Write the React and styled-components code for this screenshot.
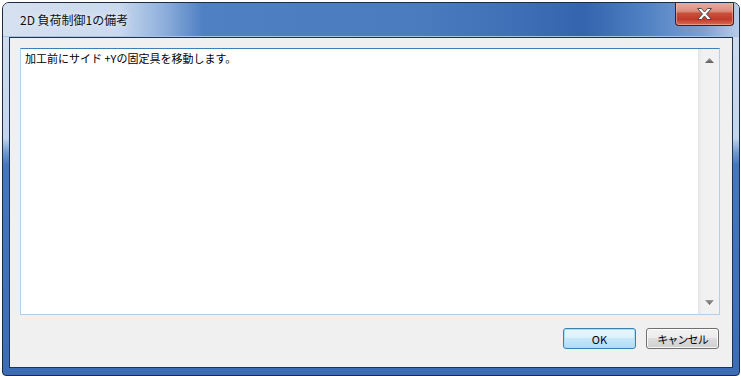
import { createGlobalStyle, styled } from "styled-components";

const GlobalStyle = createGlobalStyle`
  html, body {
    margin: 0;
    background: #fff;
  }
  body {
    font-family: "Noto Sans CJK JP", "Noto Sans", sans-serif;
    color: #000;
  }
`;

const Window = styled.div`
  box-sizing: border-box;
  width: 738px;
  height: 374px;
  margin: 2px 0 0 2px;
  border: 1px solid #1c2b3f;
  border-radius: 7px 7px 4px 4px;
  overflow: hidden;
  display: flex;
  flex-direction: column;
  background: linear-gradient(
    to bottom,
    #d3deee 0,
    #c4d5ec 135px,
    #6f98d0 150px,
    #4676bc 162px,
    #3f70b8 300px,
    #3b6cb4 100%
  );
`;

const TitleBar = styled.div`
  box-sizing: border-box;
  height: 34px;
  flex: none;
  display: flex;
  justify-content: space-between;
  border-bottom: 1px solid #a9c1e2;
  background: linear-gradient(
    90deg,
    #d6e1f0 0,
    #cad9ee 115px,
    #8fb0dc 160px,
    #4f80c3 200px,
    #4a7bbf 420px,
    #3e6eb5 520px,
    #3364ad 580px,
    #4f80c3 640px,
    #7aa0d3 700px,
    #b7cdea 736px
  );
`;

const Title = styled.div`
  padding: 9px 0 0 17px;
  font-size: 12px;
  line-height: 16px;
  color: #111;
  text-shadow: 0 0 6px rgba(255, 255, 255, 0.9);
`;

const CloseButton = styled.div`
  box-sizing: border-box;
  width: 59px;
  height: 24px;
  margin: -1px 5px 0 0;
  border: 1px solid #4a1a16;
  border-top: none;
  border-radius: 0 0 4px 4px;
  display: flex;
  align-items: center;
  justify-content: center;
  background: linear-gradient(
    to bottom,
    #eab0a3 0,
    #dc8d7e 40%,
    #c8503c 50%,
    #c13b27 75%,
    #d86c52 100%
  );
  box-shadow: inset 0 0 0 1px rgba(255, 210, 200, 0.45);
`;

const Frame = styled.div`
  flex: 1;
  display: flex;
  padding: 0 6px 7px;
`;

const Client = styled.div`
  flex: 1;
  display: flex;
  flex-direction: column;
  border: 1px solid #1d3352;
  background: #f0f0f0;
`;

const TextBox = styled.div`
  box-sizing: border-box;
  height: 267px;
  margin: 10px 12px 0 10px;
  display: flex;
  background: #fff;
  border: 1px solid #b3d0ea;
  border-top-color: #3d7fb6;
`;

const TextContent = styled.div`
  flex: 1;
  padding: 2px 4px;
  font-size: 11px;
  line-height: 15px;
  color: #000;
`;

const ScrollBar = styled.div`
  width: 20px;
  display: flex;
  flex-direction: column;
  justify-content: space-between;
  align-items: center;
  padding: 9px 0;
  border-left: 1px solid #e4e4e4;
  background: linear-gradient(90deg, #e9e9e9 0, #f1f1f1 4px, #f1f1f1 100%);
`;

const ButtonRow = styled.div`
  display: flex;
  justify-content: flex-end;
  gap: 10px;
  margin: 13px 13px 0 0;
`;

const Button = styled.div`
  box-sizing: border-box;
  width: 73px;
  height: 21px;
  border-radius: 3px;
  display: flex;
  align-items: center;
  justify-content: center;
  font-size: 11px;
  letter-spacing: ${(p) => (p.$tight ? "-0.9px" : "0")};
  border: 1px solid ${(p) => (p.$primary ? "#3c7fb1" : "#707070")};
  background: ${(p) =>
    p.$primary
      ? "linear-gradient(to bottom, #eaf6fd 0, #d9f0fc 50%, #c6e7fa 50%, #b2dcf4 100%)"
      : "linear-gradient(to bottom, #f2f2f2 0, #ebebeb 50%, #dddddd 50%, #cfcfcf 100%)"};
  box-shadow: inset 0 0 0 1px
    ${(p) => (p.$primary ? "#a9e0f8" : "rgba(255, 255, 255, 0.8)")};
`;

const Arrow = ({ down }) => (
  <svg width="9" height="5" viewBox="0 0 9 5">
    <defs>
      <linearGradient id={down ? "ad" : "au"} x1="0" y1="0" x2="0" y2="1">
        <stop offset="0" stopColor="#9a9a9a" />
        <stop offset="1" stopColor="#5e5e5e" />
      </linearGradient>
    </defs>
    <polygon
      points={down ? "0,0 9,0 4.5,5" : "4.5,0 9,5 0,5"}
      fill={`url(#${down ? "ad" : "au"})`}
    />
  </svg>
);

const CloseIcon = () => (
  <svg width="15" height="12" viewBox="-0.5 -0.5 15 12">
    <polygon
      points="0,0 4,0 7,3.5 10,0 14,0 9,5.5 14,11 10,11 7,7.5 4,11 0,11 5,5.5"
      fill="#fff"
      stroke="#4b4b4b"
      strokeWidth="1"
      strokeLinejoin="round"
    />
  </svg>
);

export default function App() {
  return (
    <>
      <GlobalStyle />
      <Window>
        <TitleBar>
          <Title>2D 負荷制御1の備考</Title>
          <CloseButton>
            <CloseIcon />
          </CloseButton>
        </TitleBar>
        <Frame>
          <Client>
            <TextBox>
              <TextContent>加工前にサイド +Yの固定具を移動します。</TextContent>
              <ScrollBar>
                <Arrow />
                <Arrow down />
              </ScrollBar>
            </TextBox>
            <ButtonRow>
              <Button $primary>OK</Button>
              <Button $tight>キャンセル</Button>
            </ButtonRow>
          </Client>
        </Frame>
      </Window>
    </>
  );
}
